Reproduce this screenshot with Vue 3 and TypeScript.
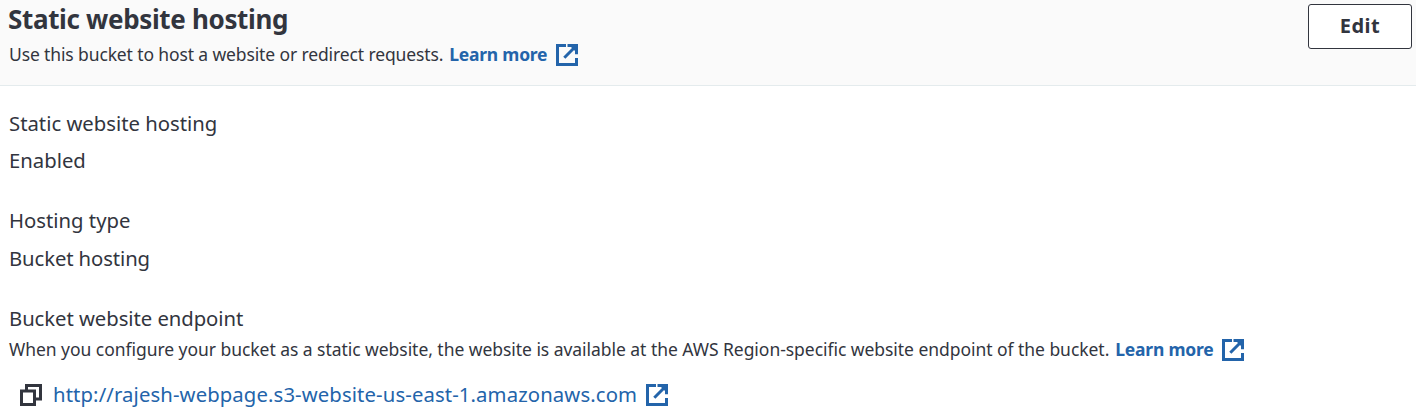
<script setup lang="ts">
interface Field {
  label: string
  value: string
  kind: string
}

const fields: Field[] = [
  { label: 'Static website hosting', value: 'Enabled', kind: 'status' },
  { label: 'Hosting type', value: 'Bucket hosting', kind: 'type' },
]
const endpoint = 'http://rajesh-webpage.s3-website-us-east-1.amazonaws.com'
const framePath = 'M10 1.5H1.5V20.5H20.5V14M18.5 3.5L8.3 13.7'
const headPath = 'M11.5 0H22V10.2H19V7L15 3H11.5Z'
</script>

<template>
  <section class="panel">
    <header class="head">
      <div>
        <h2 class="title">Static website hosting</h2>
        <p class="desc row">
          <span class="intro">Use this bucket to host a website or redirect requests.</span>
          <a class="learn">Learn more</a>
          <svg class="ext" viewBox="0 0 22 22"><path :d="framePath" /><path class="tip" :d="headPath" /></svg>
        </p>
      </div>
      <button class="edit" type="button">Edit</button>
    </header>
    <dl class="body">
      <div v-for="f in fields" :key="f.label" class="field" :class="f.kind">
        <dt>{{ f.label }}</dt>
        <dd>{{ f.value }}</dd>
      </div>
      <div class="field endpoint">
        <dt>Bucket website endpoint</dt>
        <dd class="desc row">
          <span class="hint">When you configure your bucket as a static website, the website is available at the AWS Region-specific website endpoint of the bucket.</span>
          <a class="learn">Learn more</a>
          <svg class="ext" viewBox="0 0 22 22"><path :d="framePath" /><path class="tip" :d="headPath" /></svg>
        </dd>
        <dd class="row link">
          <svg class="copy" viewBox="0 0 22 22"><path d="M1.5 7H14.5V20.5H1.5ZM6.5 7V1.5H20.5V15H14.5" /></svg>
          <a class="url">{{ endpoint }}</a>
          <svg class="ext" viewBox="0 0 22 22"><path :d="framePath" /><path class="tip" :d="headPath" /></svg>
        </dd>
      </div>
    </dl>
  </section>
</template>

<style>
body {
  background: #fff;
}
</style>

<style scoped>
.panel {
  height: 412px;
  overflow: hidden;
  font-family: 'Noto Sans', 'Open Sans', sans-serif;
  font-size: 20.3px;
  color: #32353e;
  white-space: nowrap;
}
.head {
  box-sizing: border-box;
  display: flex;
  justify-content: space-between;
  height: 86px;
  padding: 4px 4px 0 8px;
  background: #fafafa;
  border-bottom: 1px solid #e4ebed;
}
h2, p, dl, dd, dt {
  margin: 0;
}
.title {
  font-size: 26px;
  line-height: 30px;
  letter-spacing: -0.34px;
}
.row {
  display: flex;
  align-items: center;
}
.row > span, .row > a {
  padding-bottom: 2px;
}
.desc {
  height: 22px;
  font-size: 17.5px;
}
.head .desc {
  margin-top: 10px;
  padding-left: 1px;
}
.intro {
  letter-spacing: -0.125px;
}
.hint {
  letter-spacing: -0.045px;
}
.learn {
  margin-left: 6px;
  font-weight: 700;
  letter-spacing: -0.23px;
  color: #2364aa;
}
.ext {
  flex: none;
  width: 22px;
  height: 22px;
  margin-left: 8.5px;
  fill: none;
  stroke: #2364aa;
  stroke-width: 3;
}
.tip {
  fill: #2364aa;
  stroke: none;
}
.edit {
  box-sizing: border-box;
  width: 104px;
  height: 45px;
  padding: 0 0 2px;
  font: 700 20px 'Noto Sans', sans-serif;
  letter-spacing: 0.5px;
  color: #32353e;
  background: #fff;
  border: 1px solid #32353e;
  border-radius: 3px;
}
.body {
  padding: 23px 9px 0;
}
dt, dd {
  height: 30px;
  line-height: 28px;
}
.field {
  height: 98px;
}
.type dt, .endpoint dt {
  line-height: 26px;
}
.type dd {
  letter-spacing: -0.1px;
}
.endpoint dt {
  letter-spacing: -0.05px;
}
.field dd:not(.row) {
  margin-top: 7px;
}
.field .desc {
  height: 22px;
  margin-top: 4px;
}
.copy {
  flex: none;
  width: 22px;
  height: 22px;
  margin: 0 11px 0 11px;
  fill: none;
  stroke: #32353e;
  stroke-width: 3;
}
.url {
  letter-spacing: 0.115px;
  color: #2364aa;
}
.link {
  margin-top: 19px;
}
</style>
